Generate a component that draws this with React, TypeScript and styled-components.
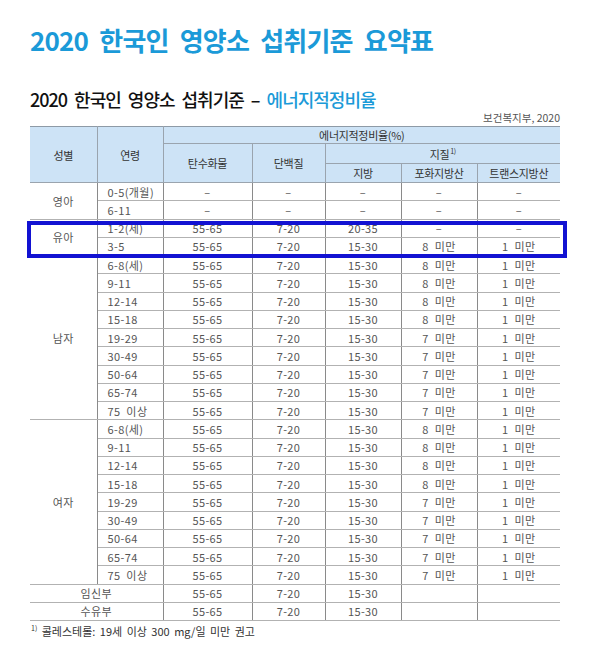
import React from "react";
import styled, { createGlobalStyle } from "styled-components";

const Global = createGlobalStyle`
  html, body { margin: 0; padding: 0; background: #ffffff; }
  body { font-family: "Noto Sans CJK KR", "Noto Sans", sans-serif; }
`;

const Page = styled.div`
  width: 597px;
  height: 664px;
  box-sizing: border-box;
  padding: 24px 37px 0 30px;
  display: flex;
  flex-direction: column;
`;

const Title = styled.h1`
  margin: 0;
  font-size: 26px;
  line-height: 32px;
  font-weight: 700;
  color: #1b9ad8;
  letter-spacing: -0.8px;
  word-spacing: 6px;
`;

const SubTitle = styled.h2`
  margin: 31px 0 0;
  font-size: 18px;
  line-height: 24px;
  font-weight: 500;
  color: #111;
  letter-spacing: -1px;
  word-spacing: 4px;
`;

const Accent = styled.span`
  color: #1b9ad8;
`;

const Source = styled.div`
  align-self: flex-end;
  font-size: 10.5px;
  line-height: 14px;
  color: #555;
  margin-bottom: 1px;
`;

const TableWrap = styled.div`
  position: relative;
  width: 530px;
`;

const Table = styled.table`
  width: 530px;
  border-collapse: collapse;
  table-layout: fixed;
  border-top: 1px solid #8e9aa6;
  border-bottom: 1px solid #8c8c8c;
`;

const Head = styled.th<{ $h?: number }>`
  background: #cde3f6;
  color: #333;
  font-weight: 400;
  font-size: 11px;
  letter-spacing: -0.3px;
  height: ${(p) => p.$h ?? 18}px;
  padding: 0;
  border: 1px solid #9aa4ae;
  border-top: none;
  &:first-child { border-left: none; }
  &:last-child { border-right: none; }
`;

const Cell = styled.td<{ $left?: boolean }>`
  font-size: 11px;
  color: #555;
  letter-spacing: 0.4px;
  word-spacing: 3px;
  text-align: ${(p) => (p.$left ? "left" : "center")};
  padding: 0 0 0 ${(p) => (p.$left ? "10px" : "0")};
  height: 17.25px;
  line-height: 14px;
  border-top: 1px solid #b2b2b2;
  border-bottom: 1px solid #b2b2b2;
  border-left: 1px solid #8a8a8a;
  border-right: 1px solid #8a8a8a;
  white-space: nowrap;
  &:first-child { border-left: none; }
  &:last-child { border-right: none; }
`;

const Sup = styled.sup`
  font-size: 7px;
  line-height: 0;
  vertical-align: 5px;
  margin-left: 1px;
`;

const Highlight = styled.div`
  position: absolute;
  left: -3px;
  top: 95px;
  width: 540px;
  height: 37px;
  box-sizing: border-box;
  border: 4px solid #1212d2;
  pointer-events: none;
`;

const Footnote = styled.div`
  margin-top: 2px;
  font-size: 11px;
  color: #333;
  letter-spacing: 0px;
  word-spacing: 2px;
`;

type Row = [string, string, string, string, string, string];

const groups: { name: string; rows: Row[] }[] = [
  {
    name: "영아",
    rows: [
      ["0-5(개월)", "–", "–", "–", "–", "–"],
      ["6-11", "–", "–", "–", "–", "–"],
    ],
  },
  {
    name: "유아",
    rows: [
      ["1-2(세)", "55-65", "7-20", "20-35", "–", "–"],
      ["3-5", "55-65", "7-20", "15-30", "8 미만", "1 미만"],
    ],
  },
];

const adultAges = ["6-8(세)", "9-11", "12-14", "15-18", "19-29", "30-49", "50-64", "65-74", "75 이상"];
const adultRows: Row[] = adultAges.map((a, i) => [a, "55-65", "7-20", "15-30", i < 4 ? "8 미만" : "7 미만", "1 미만"]);
groups.push({ name: "남자", rows: adultRows }, { name: "여자", rows: adultRows });

const special = ["임신부", "수유부"];

export default function App() {
  return (
    <>
      <Global />
      <Page>
        <Title>2020 한국인 영양소 섭취기준 요약표</Title>
        <SubTitle>
          2020 한국인 영양소 섭취기준 – <Accent>에너지적정비율</Accent>
        </SubTitle>
        <Source>보건복지부, 2020</Source>
        <TableWrap>
          <Table>
            <colgroup>
              <col style={{ width: 67 }} />
              <col style={{ width: 66 }} />
              <col style={{ width: 89 }} />
              <col style={{ width: 73 }} />
              <col style={{ width: 76 }} />
              <col style={{ width: 76 }} />
              <col style={{ width: 83 }} />
            </colgroup>
            <thead>
              <tr>
                <Head rowSpan={3}>성별</Head>
                <Head rowSpan={3}>연령</Head>
                <Head colSpan={5} $h={16}>에너지적정비율(%)</Head>
              </tr>
              <tr>
                <Head rowSpan={2}>탄수화물</Head>
                <Head rowSpan={2}>단백질</Head>
                <Head colSpan={3} $h={19}>
                  지질<Sup>1)</Sup>
                </Head>
              </tr>
              <tr>
                <Head $h={18}>지방</Head>
                <Head $h={18}>포화지방산</Head>
                <Head $h={18}>트랜스지방산</Head>
              </tr>
            </thead>
            <tbody>
              {groups.map((g) =>
                g.rows.map((r, i) => (
                  <tr key={g.name + r[0]}>
                    {i === 0 && <Cell rowSpan={g.rows.length}>{g.name}</Cell>}
                    <Cell $left>{r[0]}</Cell>
                    <Cell>{r[1]}</Cell>
                    <Cell>{r[2]}</Cell>
                    <Cell>{r[3]}</Cell>
                    <Cell>{r[4]}</Cell>
                    <Cell>{r[5]}</Cell>
                  </tr>
                ))
              )}
              {special.map((s) => (
                <tr key={s}>
                  <Cell colSpan={2}>{s}</Cell>
                  <Cell>55-65</Cell>
                  <Cell>7-20</Cell>
                  <Cell>15-30</Cell>
                  <Cell />
                  <Cell />
                </tr>
              ))}
            </tbody>
          </Table>
          <Highlight />
        </TableWrap>
        <Footnote>
          <Sup>1)</Sup> 콜레스테롤: 19세 이상 300 mg/일 미만 권고
        </Footnote>
      </Page>
    </>
  );
}
